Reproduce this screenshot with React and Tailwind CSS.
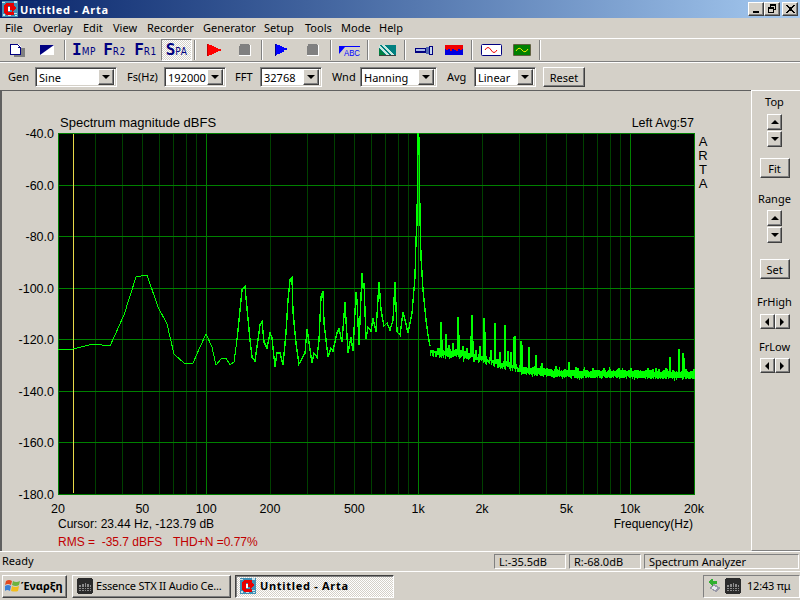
const UI_FONT = "font-['Noto_Sans','DejaVu_Sans',sans-serif]";
const RAISED = "border border-t-white border-l-white border-r-[#404040] border-b-[#404040] shadow-[inset_-1px_-1px_0_#808080]";
const SUNKEN = "border border-[#808080] border-b-white border-r-white shadow-[inset_1px_1px_0_#404040,inset_-1px_-1px_0_#d4d0c8]";
const DITHER = "bg-[repeating-conic-gradient(#ffffff_0_25%,#d4d0c8_0_50%)] bg-[length:2px_2px]";

const MENU = [["File", 28], ["Overlay", 50], ["Edit", 30], ["View", 34], ["Recorder", 56], ["Generator", 61], ["Setup", 41], ["Tools", 36], ["Mode", 38], ["Help", 30]];

// plot scales
const fx = (f) => 58 + 212 * Math.log10(f / 20);
const MINOR = [30, 40, 50, 60, 70, 80, 90, 200, 300, 400, 500, 600, 700, 800, 900, 2000, 3000, 4000, 5000, 6000, 7000, 8000, 9000];
const MAJOR = [100, 1000, 10000];
const DB = [-40, -60, -80, -100, -120, -140, -160, -180];
const dbY = (d) => 133 + (-40 - d) * 2.578;
const FREQ = [[20, "20"], [50, "50"], [100, "100"], [200, "200"], [500, "500"], [1000, "1k"], [2000, "2k"], [5000, "5k"], [10000, "10k"], [20000, "20k"]];

// traced from the low frequency part of the curve
const LOW = [[58, 349], [73, 349], [93, 344], [110, 346], [124, 315], [136, 277], [147, 275], [158, 307], [167, 324], [174, 354], [185, 364], [193, 363], [200, 347], [206, 334], [212, 347], [216, 365], [222, 358], [226, 358], [230, 365], [234, 362], [237, 340]];
const MID = [[237, 340], [242, 290], [245, 287], [250, 340], [252, 357], [255, 361], [260, 325], [262, 322], [264, 342], [267, 348], [270, 333], [272, 338], [275, 367], [277, 353], [280, 353], [283, 365], [286, 333], [288, 300], [290, 280], [292, 278], [293, 312], [296, 343], [299, 364], [305, 353], [307, 329], [309, 342], [312, 363], [314, 353], [317, 357], [319, 340], [321, 297], [323, 291], [324, 323], [328, 357], [331, 348], [333, 351], [337, 333], [339, 329], [342, 342], [345, 302], [346, 320], [348, 353], [351, 337], [353, 351], [356, 292], [357, 300], [359, 345], [362, 273], [363, 285], [364, 283], [366, 339], [368, 327], [371, 331], [373, 318], [376, 332], [379, 282], [381, 310], [384, 326], [387, 323], [390, 330], [393, 320], [395, 282], [397, 332], [400, 335], [403, 312], [405, 320], [408, 333], [412, 313], [415, 277], [416, 240], [417, 223], [418, 133], [419, 138], [420, 217], [421, 257], [423, 290], [426, 320], [428, 335], [430, 346]];

const SPIKES = [[441, 322], [442, 340], [446, 334], [449, 345], [453, 343], [458, 317], [459, 335], [463, 346], [467, 348], [471, 336], [472, 315], [473, 341], [480, 346], [484, 318], [485, 332], [491, 350], [495, 323], [500, 352], [505, 325], [508, 351], [511, 352], [514, 337], [515, 336], [521, 341], [522, 345], [529, 347], [536, 355], [542, 363], [569, 362], [670, 357], [679, 349], [683, 353], [684, 358]];

const CENTER = [[430, 352], [470, 356], [490, 361], [510, 367], [530, 371], [550, 373], [570, 374], [694, 375]];

const toPoints = (list) => list.map(([x, y]) => `${x},${y}`).join(" ");

function centerAt(x) {
  for (let i = 1; i < CENTER.length; i++) {
    if (x <= CENTER[i][0]) {
      const [x0, y0] = CENTER[i - 1];
      const [x1, y1] = CENTER[i];
      return y0 + ((y1 - y0) * (x - x0)) / (x1 - x0);
    }
  }
  return 375;
}

function noisePoints() {
  let seed = 1234;
  const rnd = () => {
    seed = (seed * 16807) % 2147483647;
    return seed / 2147483647;
  };
  const pts = [];
  let x = 430;
  while (x <= 694) {
    const c = centerAt(x);
    const early = x < 520;
    const spread = early ? 5 : 3;
    const base = early ? 0.3 : 1.5;
    const spike = SPIKES.find((s) => s[0] === x);
    const top = spike ? spike[1] : c - base - rnd() * spread - (rnd() > 0.9 ? 3 : 0);
    const bottom = c + base + rnd() * spread + (rnd() > 0.93 ? 2 : 0);
    pts.push(`${x},${Math.round(top)}`, `${x},${Math.round(bottom)}`);
    x += early ? 1 : 0.5;
  }
  return pts.join(" ");
}

function AppIcon({ size = 16 }) {
  return (
    <svg width={size} height={size} viewBox="0 0 16 16" shapeRendering="crispEdges" className="shrink-0">
      <rect width="16" height="16" fill="#3f8fb5" />
      <path d="M0 1h3v1H0zM12 0h3v2h-3zM1 13h2v2H1zM12 12h3v1h-3zM13 14h2v1h-2zM6 14h3v1H6z" fill="#c8e4ee" />
      <path d="M5 2h7v3H6v6h6v3H5l-3-2V4z" fill="#e80000" />
      <path d="M8 5h2V3l5 4-5 4V9H8z" fill="#e80000" />
      <path d="M6 6h2v4H6z" fill="#ffffff" />
    </svg>
  );
}

function MixerIcon() {
  return (
    <svg width="16" height="16" viewBox="0 0 16 16" shapeRendering="crispEdges" className="shrink-0">
      <rect x="1" y="0" width="14" height="16" fill="#2b2b2b" />
      <rect x="0" y="1" width="16" height="14" fill="#2b2b2b" />
      <path d="M2 7h2v6H2zM5 6h2v7H5zM8 5h1v8H8zM10 6h2v7h-2zM13 7h1v6h-1z" fill="#8c8c8c" />
      <path d="M2 9h12v1H2zM2 11h12v1H2z" fill="#2b2b2b" />
    </svg>
  );
}

function WinFlag() {
  return (
    <svg width="16" height="15" viewBox="0 0 16 15" className="shrink-0">
      <path d="M1 3 Q4 1 7 3 L6 7 Q3 5 0 7Z" fill="#e2491f" />
      <path d="M8 3 Q11 5 15 3 L14 7 Q11 9 7 7Z" fill="#6db33f" />
      <path d="M0 8 Q3 6 6 8 L5 13 Q2 11 0 13Z" fill="#3a7fd5" />
      <path d="M7 8 Q10 10 14 8 L13 13 Q10 14 6 13Z" fill="#f3bd1c" />
    </svg>
  );
}

const NAVY = "#000080";

function ToolIcon({ kind }) {
  switch (kind) {
    case "doc":
      return (
        <svg width="15" height="13" viewBox="0 0 15 13" shapeRendering="crispEdges">
          <rect x="4" y="4" width="11" height="9" fill="#808080" />
          <path d="M0 0h8l3 3v8H0z" fill="#ffffff" />
          <path d="M0 0h8v1H1v9h9V4h1v7H0zM8 1h1v1H8zM9 2h1v1H9zM8 3h3v1H8z" fill={NAVY} />
        </svg>
      );
    case "split":
      return (
        <svg width="14" height="10" viewBox="0 0 14 10">
          <rect width="14" height="10" fill="#ffffff" />
          <path d="M0 0h14L0 10z" fill={NAVY} />
        </svg>
      );
    case "play":
      return (
        <svg width="14" height="12" viewBox="0 0 14 12" shapeRendering="crispEdges">
          <path d="M0 0h2v1h3v1h2v1h2v1h2v1h3v2h-3v1H9v1H7v1H5v1H2v1H0z" fill="#ff0000" />
          <path d="M0 0h1v12H0z" fill="#c00000" />
        </svg>
      );
    case "playblue":
      return (
        <svg width="14" height="12" viewBox="0 0 14 12" shapeRendering="crispEdges">
          <path d="M0 0h2v1h3v1h2v1h2v1h3v2h-3v1H9v1H7v1H5v1H2v1H0z" fill="#0000ff" />
          <path d="M0 0h1v12H0z" fill="#000090" />
        </svg>
      );
    case "stop":
      return (
        <svg width="13" height="12" viewBox="0 0 13 12" shapeRendering="crispEdges">
          <path d="M2 0h9v1h1v10H1V2h1V1z" fill="#808080" />
          <path d="M12 1h1v11H1v-1h11z" fill="#ffffff" />
        </svg>
      );
    case "abc":
      return (
        <svg width="24" height="15" viewBox="-1 0 24 15" className="mt-[2px]">
          <path d="M0 2h21v1H6L0 10z" fill="#0000ff" />
          <text x="5" y="12" fontSize="9" textLength="16" lengthAdjust="spacingAndGlyphs" fill="#0000ff" fontFamily="'Liberation Sans',sans-serif">ABC</text>
        </svg>
      );
    case "stripes":
      return (
        <svg width="17" height="11" viewBox="0 0 17 11" shapeRendering="crispEdges">
          <rect width="17" height="11" fill="#008080" />
          <path d="M0 0l11 11H8L0 3zM5 0l11 11h-3L2 0z" fill="#c8e8e0" />
          <path d="M0 4l7 7H0z" fill="#008040" />
          <rect x="0" y="10" width="17" height="1" fill="#404040" />
        </svg>
      );
    case "torch":
      return (
        <svg width="18" height="9" viewBox="0 0 18 9" shapeRendering="crispEdges">
          <rect x="0" y="2" width="11" height="5" fill={NAVY} />
          <rect x="1" y="3" width="9" height="2" fill="#a8b8e8" />
          <rect x="11" y="1" width="3" height="7" fill="#5068b0" />
          <rect x="14" y="0" width="4" height="9" fill={NAVY} />
          <rect x="15" y="1" width="2" height="7" fill="#c8d8f0" />
        </svg>
      );
    case "bands":
      return (
        <svg width="18" height="10" viewBox="0 0 18 10" shapeRendering="crispEdges">
          <rect width="18" height="10" fill="#0000e0" />
          <path d="M0 0h18v4h-1v1h-2V4h-2v2h-2V5H9V4H7v2H5V4H3v1H1V4H0z" fill="#f00000" />
        </svg>
      );
    case "sinered":
      return (
        <svg width="21" height="12" viewBox="0 0 21 12">
          <rect x="0.5" y="0.5" width="20" height="11" rx="1" fill="#ffffff" stroke={NAVY} />
          <path d="M4 6 Q7 1 10 6 T16 6" fill="none" stroke="#f00000" />
        </svg>
      );
    case "sinegreen":
      return (
        <svg width="18" height="12" viewBox="0 0 18 12">
          <rect width="18" height="12" rx="1" fill="#606040" />
          <rect x="1" y="1" width="16" height="10" fill="#008000" />
          <path d="M3 7 Q6 2 9 6 T15 5" fill="none" stroke="#f0f000" />
        </svg>
      );
    default:
      return null;
  }
}

function LetterIcon({ big, small }) {
  return (
    <span className="flex items-baseline text-[#000080] leading-none">
      <span className="font-['DejaVu_Sans_Mono',monospace] font-bold text-[16px]">{big}</span>
      <span className="inline-block origin-bottom scale-y-[1.2] font-['DejaVu_Sans',sans-serif] text-[9px] tracking-[0.5px]">{small}</span>
    </span>
  );
}

function ToolBtn({ w, children, active }) {
  const width = w === 31 ? "w-[31px]" : "w-[30px]";
  const state = active ? `${DITHER} border border-t-[#808080] border-l-[#808080] border-b-white border-r-white` : "";
  return <div className={`${width} h-[22px] flex items-center justify-center ${state}`}>{children}</div>;
}

function Sep() {
  return <div className="w-[2px] h-[20px] ml-[2px] mr-[3px] border-l border-l-[#808080] border-r border-r-white" />;
}

function Toolbar() {
  return (
    <div className="h-[24px] flex items-center pl-[2px] border-t border-t-white border-b border-b-[#808080]">
      <ToolBtn><ToolIcon kind="doc" /></ToolBtn>
      <ToolBtn><ToolIcon kind="split" /></ToolBtn>
      <Sep />
      <ToolBtn><LetterIcon big="I" small="MP" /></ToolBtn>
      <ToolBtn w={31}><LetterIcon big="F" small="R2" /></ToolBtn>
      <ToolBtn w={31}><LetterIcon big="F" small="R1" /></ToolBtn>
      <ToolBtn w={31} active><LetterIcon big="S" small="PA" /></ToolBtn>
      <Sep />
      <ToolBtn><ToolIcon kind="play" /></ToolBtn>
      <ToolBtn><ToolIcon kind="stop" /></ToolBtn>
      <Sep />
      <ToolBtn w={31}><ToolIcon kind="playblue" /></ToolBtn>
      <ToolBtn w={31}><ToolIcon kind="stop" /></ToolBtn>
      <Sep />
      <ToolBtn><ToolIcon kind="abc" /></ToolBtn>
      <Sep />
      <ToolBtn><ToolIcon kind="stripes" /></ToolBtn>
      <Sep />
      <ToolBtn><ToolIcon kind="torch" /></ToolBtn>
      <ToolBtn><ToolIcon kind="bands" /></ToolBtn>
      <Sep />
      <ToolBtn><ToolIcon kind="sinered" /></ToolBtn>
      <ToolBtn w={31}><ToolIcon kind="sinegreen" /></ToolBtn>
      <Sep />
    </div>
  );
}

function Triangle({ dir }) {
  const cls = {
    up: "border-x-[4px] border-x-transparent border-b-[4px] border-b-black",
    down: "border-x-[4px] border-x-transparent border-t-[4px] border-t-black",
    left: "border-y-[4px] border-y-transparent border-r-[4px] border-r-black",
    right: "border-y-[4px] border-y-transparent border-l-[4px] border-l-black",
  }[dir];
  return <span className={`w-0 h-0 ${cls}`} />;
}

function Combo({ value, className }) {
  return (
    <div className={`h-[20px] flex items-center bg-white pl-[3px] pr-[2px] ${SUNKEN} ${className}`}>
      <span className="flex-1 text-[11px] leading-none text-black">{value}</span>
      <div className={`w-[16px] h-[16px] bg-[#d4d0c8] flex items-center justify-center ${RAISED}`}>
        <Triangle dir="down" />
      </div>
    </div>
  );
}

function OptionsRow() {
  return (
    <div className="h-[28px] flex items-center pl-[8px] pt-[1px] border-t border-t-white text-[11px] text-black">
      <span className="w-[27px]">Gen</span>
      <Combo value="Sine" className="w-[82px]" />
      <span className="w-[37px] ml-[10px]">Fs(Hz)</span>
      <Combo value="192000" className="w-[62px]" />
      <span className="w-[25px] ml-[9px]">FFT</span>
      <Combo value="32768" className="w-[62px]" />
      <span className="w-[28px] ml-[10px]">Wnd</span>
      <Combo value="Hanning" className="w-[77px]" />
      <span className="w-[27px] ml-[10px]">Avg</span>
      <Combo value="Linear" className="w-[62px]" />
      <button className={`w-[42px] h-[20px] ml-[7px] bg-[#d4d0c8] text-[11px] leading-none ${RAISED}`}>Reset</button>
    </div>
  );
}

function SpectrumPlot() {
  return (
    <svg width="749" height="460" viewBox="2 91 749 460" className="block" fontFamily="'Liberation Sans',sans-serif" fontSize="12.5" fill="#000000">
      <text x="60" y="127" fontSize="13">Spectrum magnitude dBFS</text>
      <text x="694" y="127" textAnchor="end">Left  Avg:57</text>
      <rect x="58" y="133" width="637" height="361" fill="#000000" />
      <g shapeRendering="crispEdges">
        {MINOR.map((f) => (
          <line key={f} x1={Math.round(fx(f)) + 0.5} x2={Math.round(fx(f)) + 0.5} y1="133" y2="494" stroke="#004000" />
        ))}
        {MAJOR.map((f) => (
          <line key={f} x1={Math.round(fx(f)) + 0.5} x2={Math.round(fx(f)) + 0.5} y1="133" y2="494" stroke="#008000" />
        ))}
        {DB.map((d) => (
          <line key={d} x1="58" x2="695" y1={Math.round(dbY(d)) + 0.5} y2={Math.round(dbY(d)) + 0.5} stroke="#008000" />
        ))}
        <rect x="58.5" y="133.5" width="636" height="360.5" fill="none" stroke="#008000" />
        <line x1="73.5" x2="73.5" y1="134" y2="493" stroke="#e8d848" />
        <polyline points={toPoints(LOW)} fill="none" stroke="#00ff00" />
        <polyline points={toPoints(MID)} fill="none" stroke="#00ff00" strokeWidth="1.4" />
        <polyline points={noisePoints()} fill="none" stroke="#00ff00" />
      </g>
      {DB.map((d) => (
        <text key={d} x="54" y={dbY(d) + 5} textAnchor="end">{d.toFixed(1)}</text>
      ))}
      {FREQ.map(([f, label]) => (
        <text key={f} x={fx(f)} y="513" textAnchor="middle">{label}</text>
      ))}
      <g fontSize="13">
        <text x="703" y="146" textAnchor="middle">A</text>
        <text x="703" y="160" textAnchor="middle">R</text>
        <text x="703" y="174" textAnchor="middle">T</text>
        <text x="703" y="188" textAnchor="middle">A</text>
      </g>
      <g fontSize="12">
        <text x="58" y="528">Cursor: 23.44 Hz, -123.79 dB</text>
        <text x="693" y="528" textAnchor="end">Frequency(Hz)</text>
        <text x="58" y="546" fill="#c00000" className="whitespace-pre">RMS =  -35.7 dBFS</text>
        <text x="173" y="546" fill="#c00000">THD+N =0.77%</text>
      </g>
    </svg>
  );
}

function Spin() {
  return (
    <div className="flex flex-col gap-px">
      <div className={`w-[15px] h-[16px] flex items-center justify-center ${RAISED}`}><Triangle dir="up" /></div>
      <div className={`w-[15px] h-[16px] flex items-center justify-center ${RAISED}`}><Triangle dir="down" /></div>
    </div>
  );
}

function Arrows() {
  return (
    <div className="flex">
      <div className={`w-[15px] h-[15px] flex items-center justify-center ${RAISED}`}><Triangle dir="left" /></div>
      <div className={`w-[15px] h-[15px] flex items-center justify-center ${RAISED}`}><Triangle dir="right" /></div>
    </div>
  );
}

function SideButton({ children }) {
  return <button className={`w-[30px] h-[20px] text-[11px] leading-none bg-[#d4d0c8] ${RAISED}`}>{children}</button>;
}

function SidePanel() {
  return (
    <div className="w-[49px] flex flex-col items-center pr-[3px] border-l border-l-white border-t border-t-white border-b border-b-[#808080] text-[11px] text-black">
      <span className="mt-[4px] h-[14px] leading-[14px]">Top</span>
      <div className="mt-[5px]"><Spin /></div>
      <div className="mt-[11px]"><SideButton>Fit</SideButton></div>
      <span className="mt-[14px] h-[14px] leading-[14px]">Range</span>
      <div className="mt-[4px]"><Spin /></div>
      <div className="mt-[16px]"><SideButton>Set</SideButton></div>
      <span className="mt-[16px] h-[14px] leading-[14px]">FrHigh</span>
      <div className="mt-[5px]"><Arrows /></div>
      <span className="mt-[11px] h-[14px] leading-[14px]">FrLow</span>
      <div className="mt-[4px]"><Arrows /></div>
    </div>
  );
}

function StatusCell({ className, children }) {
  return (
    <div className={`h-[15px] flex items-center pl-[4px] text-[11px] leading-none border border-[#808080] border-b-white border-r-white ${className}`}>
      {children}
    </div>
  );
}

function TrayArrow() {
  return (
    <svg width="14" height="14" viewBox="0 0 14 14" shapeRendering="crispEdges" className="shrink-0">
      <path d="M1 9l5-4 7 4-5 4z" fill="#9a9aa8" />
      <path d="M3 9l3-2 4 2-3 2z" fill="#e8e8f0" />
      <path d="M3 0h2v2h4v3H5v2H4L1 3z" fill="#30b030" />
    </svg>
  );
}

function Taskbar() {
  return (
    <div className="h-[28px] flex items-center pl-[2px] pr-0 text-[11px] text-black">
      <button className={`w-[65px] h-[23px] flex items-center pl-[2px] pb-[1px] bg-[#d4d0c8] font-bold ${RAISED}`}>
        <WinFlag />
        <span className="leading-none">Έναρξη</span>
      </button>
      <div className={`w-[159px] h-[23px] ml-[5px] flex items-center gap-[3px] pl-[4px] pb-[1px] ${RAISED}`}>
        <MixerIcon />
        <span className="leading-none whitespace-nowrap tracking-[-0.2px]">Essence STX II Audio Ce...</span>
      </div>
      <div className={`w-[159px] h-[23px] ml-[4px] flex items-center gap-[4px] pl-[4px] pb-[1px] font-bold border border-t-[#404040] border-l-[#404040] border-r-white border-b-white shadow-[inset_1px_1px_0_#808080] ${DITHER}`}>
        <AppIcon />
        <span className="leading-none whitespace-nowrap tracking-[0.7px]">Untitled - Arta</span>
      </div>
      <div className="ml-auto w-[97px] h-[23px] flex items-center pl-[4px] border border-[#808080] border-b-white border-r-white">
        <TrayArrow />
        <div className="ml-[3px]"><MixerIcon /></div>
        <span className="ml-[6px] pb-[1px] whitespace-nowrap leading-none tracking-[-0.2px]">12:43 πμ</span>
      </div>
    </div>
  );
}

export default function App() {
  return (
    <div className={`w-[800px] h-[600px] overflow-hidden flex flex-col bg-[#d4d0c8] ${UI_FONT}`}>
      <div className="h-[18px] flex items-center pl-[2px] pr-[2px] bg-gradient-to-r from-[#0a246a] to-[#a6caf0]">
        <AppIcon />
        <span className="ml-[2px] flex-1 text-[11px] font-bold text-white leading-none tracking-[0.7px]">Untitled - Arta</span>
        <div className={`w-[16px] h-[14px] bg-[#d4d0c8] flex items-end justify-center pb-[2px] ${RAISED}`}>
          <span className="block w-[6px] h-[2px] bg-black" />
        </div>
        <div className={`w-[16px] h-[14px] bg-[#d4d0c8] flex items-center justify-center ${RAISED}`}>
          <svg width="10" height="10" viewBox="0 0 10 10" shapeRendering="crispEdges">
            <path d="M3 0h6v6H7v-1h1V2H4v1H3zM1 3h6v6H1z" fill="#000000" />
            <rect x="2" y="5" width="4" height="3" fill="#d4d0c8" />
          </svg>
        </div>
        <div className={`w-[16px] h-[14px] ml-[2px] bg-[#d4d0c8] flex items-center justify-center ${RAISED}`}>
          <svg width="9" height="8" viewBox="0 0 9 8" shapeRendering="crispEdges">
            <path d="M0 0h2v1h1v1h3V1h1V0h2v1H8v1H7v1H6v2h1v1h1v1h1v1H7V7H6V6H3v1H2v1H0V7h1V6h1V5h1V3H2V2H1V1H0z" fill="#000000" />
          </svg>
        </div>
      </div>

      <div className="h-[20px] flex items-center pl-[5px] text-[11px] text-black">
        {MENU.map(([label, width]) => (
          <span key={label} style={{ width }}>{label}</span>
        ))}
      </div>

      <Toolbar />
      <OptionsRow />

      <div className="h-[462px] flex border-b border-b-white">
        <div className="flex-1 border-l-2 border-l-[#606060] border-t border-t-[#606060]">
          <SpectrumPlot />
        </div>
        <SidePanel />
      </div>

      <div className="h-[20px] flex items-center gap-[3px] pl-[494px] pr-[1px] border-b border-b-white text-black relative">
        <span className="absolute left-[2px] text-[11px]">Ready</span>
        <StatusCell className="w-[72px]">L:-35.5dB</StatusCell>
        <StatusCell className="w-[72px]">R:-68.0dB</StatusCell>
        <StatusCell className="flex-1">Spectrum Analyzer</StatusCell>
      </div>

      <Taskbar />
    </div>
  );
}
